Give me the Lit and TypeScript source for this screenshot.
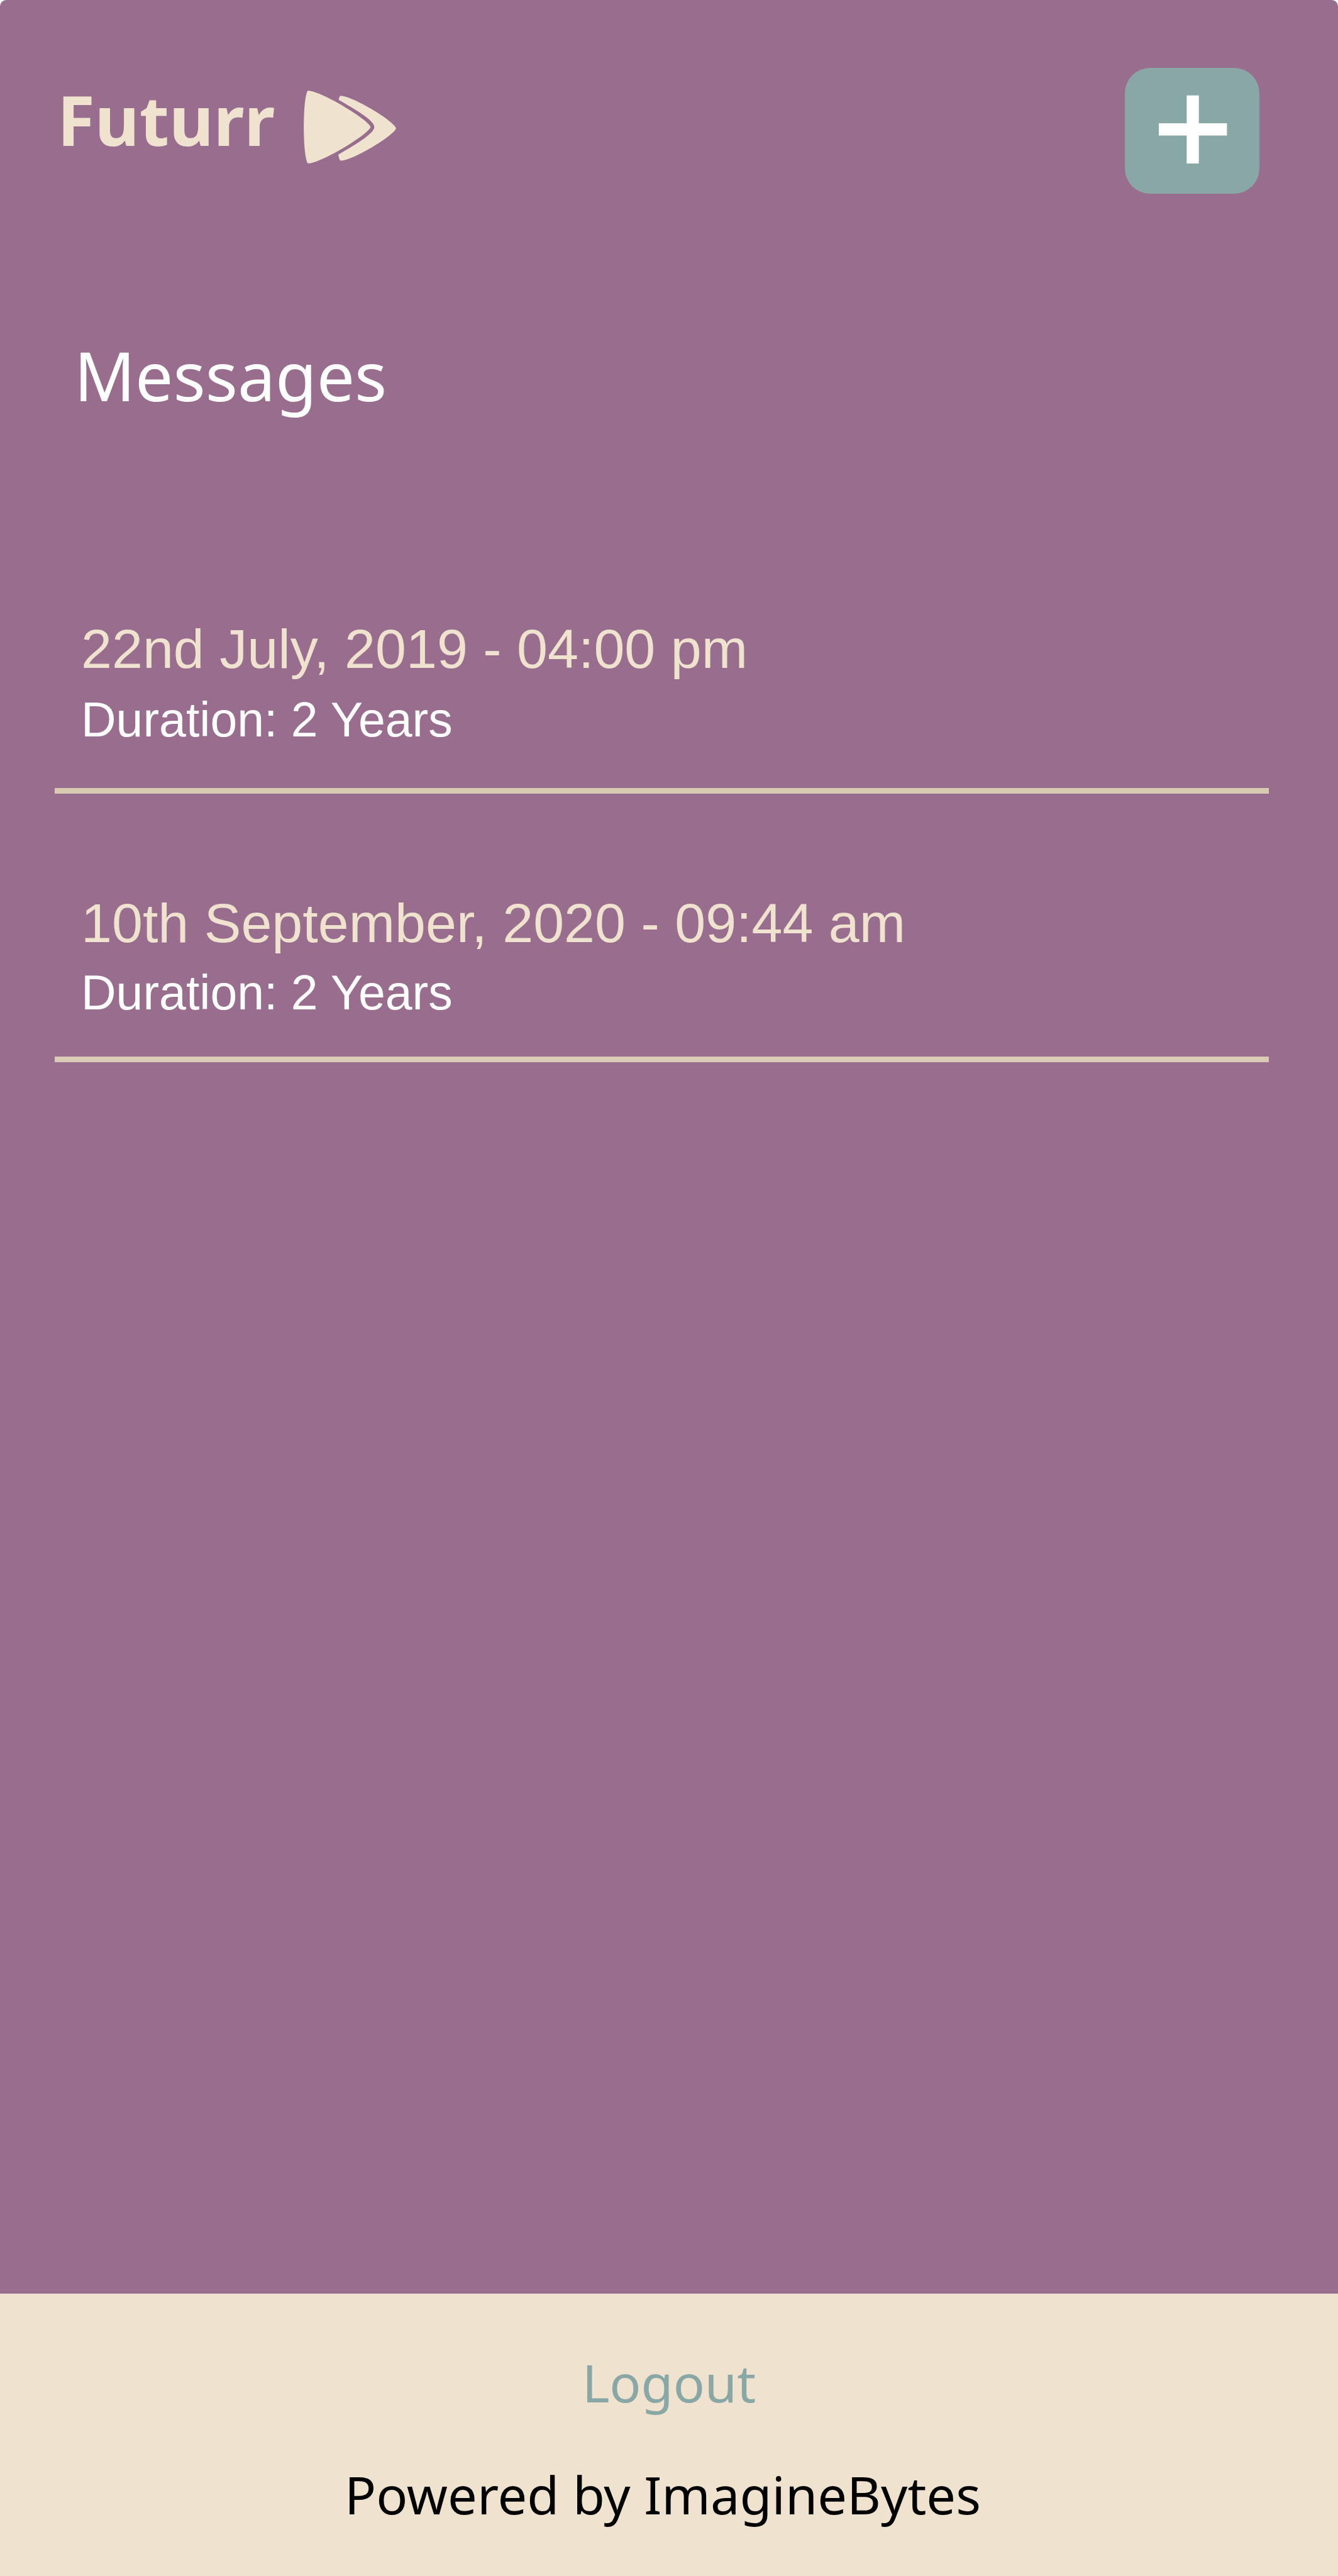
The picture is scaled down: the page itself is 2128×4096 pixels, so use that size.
import { LitElement, html, css } from "lit";
import { customElement, state } from "lit/decorators.js";

interface Message {
  date: string;
  duration: string;
}

@customElement("app-root")
export class AppRoot extends LitElement {
  static styles = css`
    :host {
      display: block;
      background: #ffffff;
    }

    .page {
      display: flex;
      flex-direction: column;
      min-height: 100vh;
      overflow: hidden;
      border-radius: 10px 10px 0 0;
      background: #996d8e;
      font-family: "Noto Sans", sans-serif;
    }

    .header {
      display: flex;
      justify-content: space-between;
      align-items: flex-start;
      padding: 108px 125px 0 91px;
    }

    .brand {
      display: flex;
      align-items: flex-start;
      gap: 46px;
      color: #efe2cf;
      font-size: 109px;
      font-weight: 700;
      line-height: 164px;
      text-decoration: none;
    }

    .logo {
      width: 147px;
      height: 116px;
      margin-top: 36px;
      fill: currentColor;
    }

    .add {
      display: block;
      width: 214px;
      height: 200px;
      padding: 0;
      border: 0;
      border-radius: 40px;
      background: #88a7a5;
      color: #ffffff;
      cursor: pointer;
    }

    .plus {
      display: block;
      width: 100%;
      height: 100%;
      fill: currentColor;
    }

    .content {
      flex: 1;
      padding-top: 210px;
    }

    .title {
      margin: 0;
      padding-left: 118px;
      color: #ffffff;
      font-size: 107px;
      font-weight: 400;
      line-height: 158px;
    }

    .messages {
      margin: 150px 110px 0 87px;
      padding: 0;
      list-style: none;
      font-family: "Liberation Sans", Arial, sans-serif;
    }

    .message {
      display: flex;
      flex-direction: column;
      gap: 18px;
      padding: 156px 0 65px 42px;
      border-bottom: 9px solid #d9cab3;
    }

    .message + .message {
      gap: 16px;
      padding-bottom: 58px;
    }

    .date {
      color: #efe2cf;
      font-size: 88px;
      line-height: 100px;
    }

    .duration {
      color: #ffffff;
      font-size: 77px;
      line-height: 88px;
    }

    .footer {
      display: flex;
      flex-direction: column;
      align-items: center;
      gap: 58px;
      padding: 81px 0 70px;
      background: #efe2cf;
      font-size: 83px;
      line-height: 120px;
    }

    .logout {
      color: #88a7a5;
      text-decoration: none;
    }

    .credit {
      margin: 0;
      padding-right: 20px;
      color: #000000;
    }
  `;

  @state()
  private messages: Message[] = [
    { date: "22nd July, 2019 - 04:00 pm", duration: "2 Years" },
    { date: "10th September, 2020 - 09:44 am", duration: "2 Years" },
  ];

  render() {
    return html`
      <div class="page">
        <header class="header">
          <a class="brand" href="#">
            <span>Futurr</span>
            <svg class="logo" viewBox="148 120 827 652" aria-hidden="true">
              <path
                d="M184 121C290 116 718 372 747 446C718 520 290 776 184 771C137 700 137 192 184 121Z"
              />
              <path
                d="M474 168C560 155 951 385 975 457C951 529 560 759 475 746C466 732 460 710 458 692C600 610 780 505 780 446C780 385 600 285 461 203C463 190 468 177 474 168Z"
              />
            </svg>
          </a>
          <button class="add" type="button" aria-label="Add message">
            <svg class="plus" viewBox="0 0 214 200" aria-hidden="true">
              <path
                d="M98.4 43.7h19.3v44.4h44.7v19.3h-44.7V152H98.4v-44.6H54V88.1h44.4Z"
              />
            </svg>
          </button>
        </header>
        <main class="content">
          <h1 class="title">Messages</h1>
          <ul class="messages">
            ${this.messages.map(
              (m) => html`
                <li class="message">
                  <span class="date">${m.date}</span>
                  <span class="duration">Duration: ${m.duration}</span>
                </li>
              `
            )}
          </ul>
        </main>
        <footer class="footer">
          <a class="logout" href="#">Logout</a>
          <p class="credit">Powered by ImagineBytes</p>
        </footer>
      </div>
    `;
  }
}
